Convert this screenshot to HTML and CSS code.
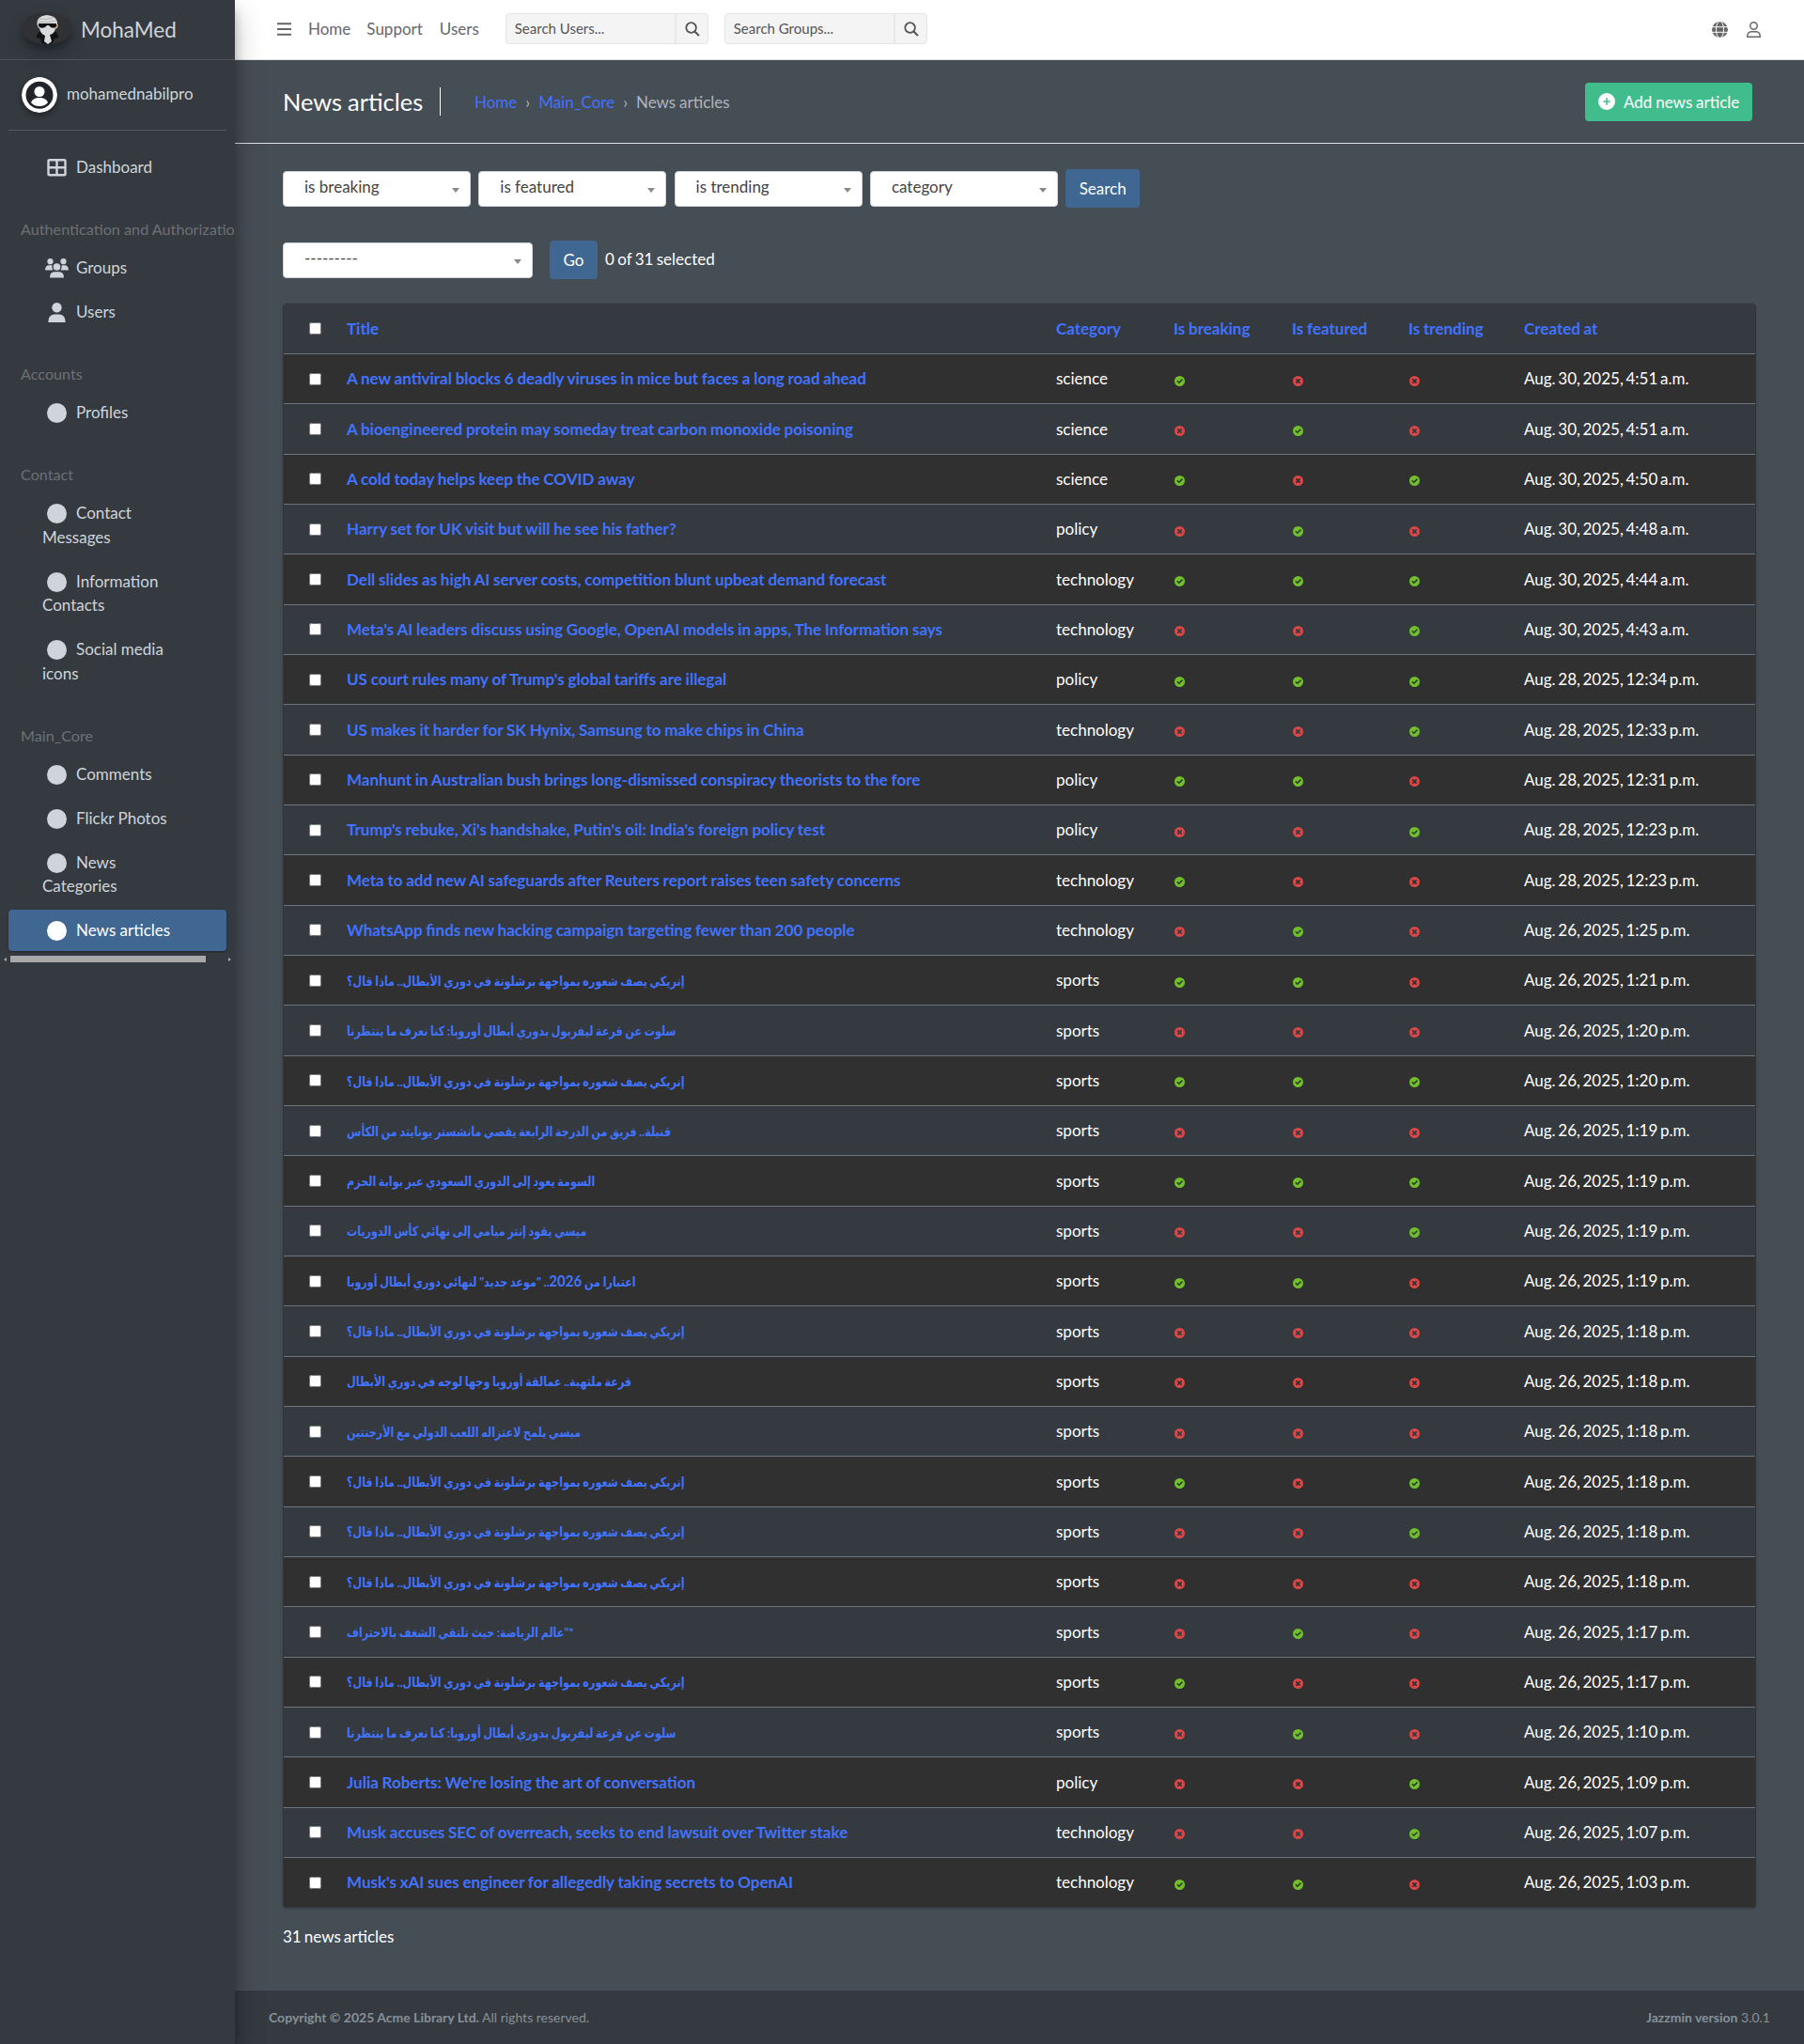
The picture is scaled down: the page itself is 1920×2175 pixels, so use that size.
FILE: index.html
```html
<!DOCTYPE html>
<html lang="en">
<head>
<meta charset="utf-8">
<title>News articles</title>
<link rel="stylesheet" href="styles.css">
</head>
<body>
<svg class="defs" aria-hidden="true">
<symbol id="y" viewBox="0 0 12 12"><path fill="#70bf2b" d="M6 0a6 6 0 1 0 0 12A6 6 0 0 0 6 0zM5.3 9.1 2.5 6.4l1.2-1.2 1.6 1.5L8.6 3.4l1.2 1.2z"/></symbol>
<symbol id="n" viewBox="0 0 12 12"><path fill="#dd4646" d="M6 0a6 6 0 1 0 0 12A6 6 0 0 0 6 0zM9 7.7 7.7 9 6 7.3 4.3 9 3 7.7 4.7 6 3 4.3 4.300 3 6 4.700 7.700 3 9 4.300 7.300 6z"/></symbol>
<symbol id="dot" viewBox="0 0 21 21"><circle cx="10.5" cy="10.5" r="10.5"/></symbol>
<symbol id="glass" viewBox="0 0 16 16"><g fill="none" stroke="currentColor" stroke-width="1.8"><circle cx="6.600" cy="6.500" r="5.300"/><path stroke-width="2" d="m10.400 10.500 4.500 4.500"/></g></symbol>
</svg>
<div class="layout">
<aside class="sidebar">
  <a class="brand">
    <svg class="brand-logo" viewBox="0 0 54 34"><ellipse cx="27" cy="17" rx="27" ry="17" fill="#303134"/><path d="M16 25q2-5 7-6h9q5 1 7 6v2l-4 1-2 5q-6 2-12 0l-1-5-4-1z" fill="#111214"/><path d="M16.500 13q-1-9 10.500-10 11.500 1 11 10l-1 4h-19z" fill="#d9d9db"/><path d="M18 7q9 2 17-2M17 10q10 2 20-1" stroke="#aaa" fill="none" stroke-width=".8"/><path d="M36 13h3l-1 4-3 1z" fill="#c9a781"/><path d="M19 17h17q-1 6-6 7l2 7-4 3-4-3 1-6q-5-2-6-8z" fill="#d9d9db"/><path d="M18 12h19v3q-2 3-6 1l-2-2h-2l-2 2q-5 2-7-1z" fill="#111"/></svg>
    <span>MohaMed</span>
  </a>
  <div class="user">
    <svg class="avatar" viewBox="0 0 38 38"><circle cx="19" cy="19" r="19" fill="#fff"/><circle cx="19" cy="19.300" r="14.500" fill="#212529"/><circle cx="19" cy="15.500" r="5.500" fill="#fff"/><path d="M10 27q2-5 9-5t9 5q-3 4-9 4t-9-4z" fill="#fff"/></svg>
    <span>mohamednabilpro</span>
  </div>
  <nav class="menu">
    <a class="item"><svg class="ico" viewBox="0 0 21 21"><path fill="none" stroke="currentColor" stroke-width="2.400" d="M2.500 2.200h16q1 0 1 1v14q0 1-1 1h-16q-1 0-1-1v-14q0-1 1-1zM10.500 2v16M1.500 10.200h18"/></svg>Dashboard</a>
    <div class="group">Authentication and Authorization</div>
    <a class="item"><svg class="ico wide" viewBox="0 0 25 21"><circle cx="5.500" cy="3.200" r="3.100"/><circle cx="19.500" cy="3.200" r="3.100"/><path d="M0 12.600q0-5.300 4.500-5.400h3q-.8 3 1 5.400zM25 12.600q0-5.300-4.500-5.400h-3q.8 3-1 5.400z"/><circle cx="12.500" cy="9" r="3.800"/><path d="M5 20.500q0-6.300 5-6.300h5q5 0 5 6.300z"/></svg>Groups</a>
    <a class="item"><svg class="ico" viewBox="0 0 21 21"><circle cx="10.500" cy="5.300" r="5.200"/><path d="M1.300 21q0-8.500 7-8.500h4.400q7 0 7 8.500z"/></svg>Users</a>
    <div class="group">Accounts</div>
    <a class="item"><svg class="ico"><use href="#dot"/></svg>Profiles</a>
    <div class="group">Contact</div>
    <a class="item"><svg class="ico"><use href="#dot"/></svg>Contact Messages</a>
    <a class="item"><svg class="ico"><use href="#dot"/></svg>Information Contacts</a>
    <a class="item"><svg class="ico"><use href="#dot"/></svg>Social media icons</a>
    <div class="group">Main_Core</div>
    <a class="item"><svg class="ico"><use href="#dot"/></svg>Comments</a>
    <a class="item"><svg class="ico"><use href="#dot"/></svg>Flickr Photos</a>
    <a class="item"><svg class="ico"><use href="#dot"/></svg>News Categories</a>
    <a class="item active"><svg class="ico"><use href="#dot"/></svg>News articles</a>
  </nav>
  <div class="scroll"><i class="left"></i><b></b><i class="right"></i></div>
</aside>
<div class="page">
<header class="topbar">
  <svg class="bars" viewBox="0 0 15 14"><path d="M0 1.200h15M0 7h15M0 12.800h15" stroke="currentColor" stroke-width="1.900"/></svg>
  <a>Home</a><a>Support</a><a>Users</a>
  <div class="find"><span>Search Users...</span><svg><use href="#glass"/></svg></div>
  <div class="find"><span>Search Groups...</span><svg><use href="#glass"/></svg></div>
  <svg class="globe" viewBox="0 0 17 17"><circle cx="8.500" cy="8.500" r="8.500" fill="currentColor"/><g fill="none" stroke="#fff" stroke-width="1"><ellipse cx="8.500" cy="8.500" rx="4" ry="9"/><path d="M0 5.700h17M0 11.300h17"/></g></svg>
  <svg class="person" viewBox="0 0 15 17"><g fill="none" stroke="currentColor" stroke-width="1.500"><circle cx="7.500" cy="4.500" r="3.700"/><path d="M.8 16.200q-.3-5.400 4.200-5.400h5q4.500 0 4.200 5.400z"/></g></svg>
</header>
<section class="heading">
  <h1>News articles</h1>
  <div class="crumbs"><a>Home</a><i>›</i><a>Main_Core</a><i>›</i><span>News articles</span></div>
  <a class="btn add"><svg viewBox="0 0 18 18"><circle cx="9" cy="9" r="9" fill="#fff"/><path d="M9 5.300v7.400M5.300 9h7.400" stroke="#41bd8d" stroke-width="1.600"/></svg>Add news article</a>
</section>
<main>
  <div class="filters"><div class="select">is breaking</div><div class="select">is featured</div><div class="select">is trending</div><div class="select">category</div><a class="btn">Search</a></div>
  <div class="actions"><div class="select long">---------</div><a class="btn">Go</a><span>0 of 31 selected</span></div>
  <div class="card">
  <table>
  <colgroup><col class="c1"><col class="c2"><col class="c3"><col class="c4"><col class="c5"><col class="c6"><col></colgroup>
  <thead><tr><th><input type="checkbox"></th><th>Title</th><th>Category</th><th>Is breaking</th><th>Is featured</th><th>Is trending</th><th>Created at</th></tr></thead>
  <tbody>
  <tr><td><input type="checkbox"><th>A new antiviral blocks 6 deadly viruses in mice but faces a long road ahead<td>science<td><svg><use href="#y"/></svg><td><svg><use href="#n"/></svg><td><svg><use href="#n"/></svg><td>Aug. 30, 2025, 4:51 a.m.
  <tr><td><input type="checkbox"><th>A bioengineered protein may someday treat carbon monoxide poisoning<td>science<td><svg><use href="#n"/></svg><td><svg><use href="#y"/></svg><td><svg><use href="#n"/></svg><td>Aug. 30, 2025, 4:51 a.m.
  <tr><td><input type="checkbox"><th>A cold today helps keep the COVID away<td>science<td><svg><use href="#y"/></svg><td><svg><use href="#n"/></svg><td><svg><use href="#y"/></svg><td>Aug. 30, 2025, 4:50 a.m.
  <tr><td><input type="checkbox"><th>Harry set for UK visit but will he see his father?<td>policy<td><svg><use href="#n"/></svg><td><svg><use href="#y"/></svg><td><svg><use href="#n"/></svg><td>Aug. 30, 2025, 4:48 a.m.
  <tr><td><input type="checkbox"><th>Dell slides as high AI server costs, competition blunt upbeat demand forecast<td>technology<td><svg><use href="#y"/></svg><td><svg><use href="#y"/></svg><td><svg><use href="#y"/></svg><td>Aug. 30, 2025, 4:44 a.m.
  <tr><td><input type="checkbox"><th>Meta's AI leaders discuss using Google, OpenAI models in apps, The Information says<td>technology<td><svg><use href="#n"/></svg><td><svg><use href="#n"/></svg><td><svg><use href="#y"/></svg><td>Aug. 30, 2025, 4:43 a.m.
  <tr><td><input type="checkbox"><th>US court rules many of Trump's global tariffs are illegal<td>policy<td><svg><use href="#y"/></svg><td><svg><use href="#y"/></svg><td><svg><use href="#y"/></svg><td>Aug. 28, 2025, 12:34 p.m.
  <tr><td><input type="checkbox"><th>US makes it harder for SK Hynix, Samsung to make chips in China<td>technology<td><svg><use href="#n"/></svg><td><svg><use href="#n"/></svg><td><svg><use href="#y"/></svg><td>Aug. 28, 2025, 12:33 p.m.
  <tr><td><input type="checkbox"><th>Manhunt in Australian bush brings long-dismissed conspiracy theorists to the fore<td>policy<td><svg><use href="#y"/></svg><td><svg><use href="#y"/></svg><td><svg><use href="#n"/></svg><td>Aug. 28, 2025, 12:31 p.m.
  <tr><td><input type="checkbox"><th>Trump's rebuke, Xi's handshake, Putin's oil: India's foreign policy test<td>policy<td><svg><use href="#n"/></svg><td><svg><use href="#n"/></svg><td><svg><use href="#y"/></svg><td>Aug. 28, 2025, 12:23 p.m.
  <tr><td><input type="checkbox"><th>Meta to add new AI safeguards after Reuters report raises teen safety concerns<td>technology<td><svg><use href="#y"/></svg><td><svg><use href="#n"/></svg><td><svg><use href="#n"/></svg><td>Aug. 28, 2025, 12:23 p.m.
  <tr><td><input type="checkbox"><th>WhatsApp finds new hacking campaign targeting fewer than 200 people<td>technology<td><svg><use href="#n"/></svg><td><svg><use href="#y"/></svg><td><svg><use href="#n"/></svg><td>Aug. 26, 2025, 1:25 p.m.
  <tr><td><input type="checkbox"><th><span class="ar">إنريكي يصف شعوره بمواجهة برشلونة في دوري الأبطال.. ماذا قال؟</span><td>sports<td><svg><use href="#y"/></svg><td><svg><use href="#y"/></svg><td><svg><use href="#n"/></svg><td>Aug. 26, 2025, 1:21 p.m.
  <tr><td><input type="checkbox"><th><span class="ar">سلوت عن قرعة ليفربول بدوري أبطال أوروبا: كنا نعرف ما ينتظرنا</span><td>sports<td><svg><use href="#n"/></svg><td><svg><use href="#n"/></svg><td><svg><use href="#n"/></svg><td>Aug. 26, 2025, 1:20 p.m.
  <tr><td><input type="checkbox"><th><span class="ar">إنريكي يصف شعوره بمواجهة برشلونة في دوري الأبطال.. ماذا قال؟</span><td>sports<td><svg><use href="#y"/></svg><td><svg><use href="#y"/></svg><td><svg><use href="#y"/></svg><td>Aug. 26, 2025, 1:20 p.m.
  <tr><td><input type="checkbox"><th><span class="ar">قنبلة.. فريق من الدرجة الرابعة يقصي مانشستر يونايتد من الكأس</span><td>sports<td><svg><use href="#n"/></svg><td><svg><use href="#n"/></svg><td><svg><use href="#n"/></svg><td>Aug. 26, 2025, 1:19 p.m.
  <tr><td><input type="checkbox"><th><span class="ar">السومة يعود إلى الدوري السعودي عبر بوابة الحزم</span><td>sports<td><svg><use href="#y"/></svg><td><svg><use href="#y"/></svg><td><svg><use href="#y"/></svg><td>Aug. 26, 2025, 1:19 p.m.
  <tr><td><input type="checkbox"><th><span class="ar">ميسي يقود إنتر ميامي إلى نهائي كأس الدوريات</span><td>sports<td><svg><use href="#n"/></svg><td><svg><use href="#n"/></svg><td><svg><use href="#y"/></svg><td>Aug. 26, 2025, 1:19 p.m.
  <tr><td><input type="checkbox"><th><span class="ar">اعتبارا من <span class="num">2026</span>.. "موعد جديد" لنهائي دوري أبطال أوروبا</span><td>sports<td><svg><use href="#y"/></svg><td><svg><use href="#y"/></svg><td><svg><use href="#n"/></svg><td>Aug. 26, 2025, 1:19 p.m.
  <tr><td><input type="checkbox"><th><span class="ar">إنريكي يصف شعوره بمواجهة برشلونة في دوري الأبطال.. ماذا قال؟</span><td>sports<td><svg><use href="#n"/></svg><td><svg><use href="#n"/></svg><td><svg><use href="#n"/></svg><td>Aug. 26, 2025, 1:18 p.m.
  <tr><td><input type="checkbox"><th><span class="ar">قرعة ملتهبة.. عمالقة أوروبا وجها لوجه في دوري الأبطال</span><td>sports<td><svg><use href="#n"/></svg><td><svg><use href="#n"/></svg><td><svg><use href="#n"/></svg><td>Aug. 26, 2025, 1:18 p.m.
  <tr><td><input type="checkbox"><th><span class="ar">ميسي يلمح لاعتزاله اللعب الدولي مع الأرجنتين</span><td>sports<td><svg><use href="#n"/></svg><td><svg><use href="#n"/></svg><td><svg><use href="#n"/></svg><td>Aug. 26, 2025, 1:18 p.m.
  <tr><td><input type="checkbox"><th><span class="ar">إنريكي يصف شعوره بمواجهة برشلونة في دوري الأبطال.. ماذا قال؟</span><td>sports<td><svg><use href="#y"/></svg><td><svg><use href="#n"/></svg><td><svg><use href="#y"/></svg><td>Aug. 26, 2025, 1:18 p.m.
  <tr><td><input type="checkbox"><th><span class="ar">إنريكي يصف شعوره بمواجهة برشلونة في دوري الأبطال.. ماذا قال؟</span><td>sports<td><svg><use href="#n"/></svg><td><svg><use href="#n"/></svg><td><svg><use href="#y"/></svg><td>Aug. 26, 2025, 1:18 p.m.
  <tr><td><input type="checkbox"><th><span class="ar">إنريكي يصف شعوره بمواجهة برشلونة في دوري الأبطال.. ماذا قال؟</span><td>sports<td><svg><use href="#n"/></svg><td><svg><use href="#n"/></svg><td><svg><use href="#n"/></svg><td>Aug. 26, 2025, 1:18 p.m.
  <tr><td><input type="checkbox"><th><span class="ar">عالم الرياضة: حيث تلتقي الشغف بالاحتراف"*</span><td>sports<td><svg><use href="#n"/></svg><td><svg><use href="#y"/></svg><td><svg><use href="#n"/></svg><td>Aug. 26, 2025, 1:17 p.m.
  <tr><td><input type="checkbox"><th><span class="ar">إنريكي يصف شعوره بمواجهة برشلونة في دوري الأبطال.. ماذا قال؟</span><td>sports<td><svg><use href="#y"/></svg><td><svg><use href="#n"/></svg><td><svg><use href="#n"/></svg><td>Aug. 26, 2025, 1:17 p.m.
  <tr><td><input type="checkbox"><th><span class="ar">سلوت عن قرعة ليفربول بدوري أبطال أوروبا: كنا نعرف ما ينتظرنا</span><td>sports<td><svg><use href="#n"/></svg><td><svg><use href="#y"/></svg><td><svg><use href="#n"/></svg><td>Aug. 26, 2025, 1:10 p.m.
  <tr><td><input type="checkbox"><th>Julia Roberts: We're losing the art of conversation<td>policy<td><svg><use href="#n"/></svg><td><svg><use href="#n"/></svg><td><svg><use href="#y"/></svg><td>Aug. 26, 2025, 1:09 p.m.
  <tr><td><input type="checkbox"><th>Musk accuses SEC of overreach, seeks to end lawsuit over Twitter stake<td>technology<td><svg><use href="#n"/></svg><td><svg><use href="#n"/></svg><td><svg><use href="#y"/></svg><td>Aug. 26, 2025, 1:07 p.m.
  <tr><td><input type="checkbox"><th>Musk's xAI sues engineer for allegedly taking secrets to OpenAI<td>technology<td><svg><use href="#y"/></svg><td><svg><use href="#y"/></svg><td><svg><use href="#n"/></svg><td>Aug. 26, 2025, 1:03 p.m.
  </tbody>
  </table>
  </div>
  <p class="count">31 news articles</p>
</main>
<footer><span><b>Copyright © 2025 Acme Library Ltd.</b> All rights reserved.</span><span><b>Jazzmin version</b> 3.0.1</span></footer>
</div>
</div>
</body>
</html>
```
FILE: styles.css
```css
* { box-sizing: border-box; }
body { margin: 0; background: #454d55; color: #fff; font: 17px/25.5px Lato, "DejaVu Sans", sans-serif; }
.defs { position: absolute; width: 0; height: 0; }
.layout { display: flex; height: 2175px; overflow: hidden; }

/* Sidebar */
.sidebar { width: 250px; flex: none; background: #343a40; color: #ced4da; position: relative; z-index: 2; box-shadow: 0 14px 28px rgba(0,0,0,.25), 0 10px 10px rgba(0,0,0,.22); }
.brand { display: flex; align-items: center; height: 64px; padding: 0 0 4px 23px; border-bottom: 1px solid #4b545c; font-size: 22.5px; gap: 9px; }
.brand-logo { width: 54px; height: 34px; border-radius: 50%; box-shadow: 0 10px 20px rgba(0,0,0,.19), 0 6px 6px rgba(0,0,0,.23); }
.brand span { padding-top: 4px; }
.user { display: flex; align-items: center; height: 75px; margin: 0 9px; padding-left: 14px; border-bottom: 1px solid #4f5962; gap: 10px; }
.user span { padding-bottom: 2px; }
.avatar { width: 38px; height: 38px; border-radius: 50%; box-shadow: 0 3px 6px rgba(0,0,0,.16), 0 3px 6px rgba(0,0,0,.23); }
.menu { padding: 17px 9px 0; overflow: hidden; }
.item { display: block; margin-bottom: 3px; padding: 9.25px 41px 9.25px 36px; border-radius: 4px; }
.item.active { background: #3f6791; color: #fff; box-shadow: 0 1px 3px rgba(0,0,0,.12), 0 1px 2px rgba(0,0,0,.24); }
.ico { width: 21px; height: 21px; margin: -4px 10px -4px 5px; fill: currentColor; vertical-align: -1px; }
.ico.wide { width: 25px; margin: -4px 8px -4px 3px; }
.group { height: 60px; padding: 29px 0 0 13px; font-size: 16.2px; line-height: 23px; color: #6c7075; white-space: nowrap; margin-right: -9px; }
.scroll { display: flex; align-items: center; height: 7px; margin-top: 2px; padding: 0 4px; }
.scroll b { width: 208px; height: 7px; margin: 0 24px 0 4px; background: #a8a8a8; }
.scroll i { border: 2.5px solid transparent; }
.scroll .left { border-right: 3px solid #aaa; border-left: 0; }
.scroll .right { border-left: 3px solid #aaa; border-right: 0; }

/* Top bar and page heading */
.page { flex: 1; display: flex; flex-direction: column; min-width: 0; }
.topbar { display: flex; align-items: center; height: 64px; flex: none; padding: 0 41px 2px 45px; background: #fff; border-bottom: 1px solid #dee2e6; color: #666; }
.bars { width: 15px; height: 14px; margin-right: 18px; }
.topbar a { margin-right: 17px; }
.topbar a:nth-of-type(2) { margin-right: 18px; }
.find { display: flex; height: 33px; width: 216px; border: 1px solid #e6e6e6; border-radius: 4px; background: #f4f4f4; font-size: 15px; line-height: 31px; color: #555; }
.find + .find { margin-left: 17px; }
.find span { width: 181px; padding-left: 9px; border-right: 2px solid #e8e8e8; }
.find svg { width: 16px; height: 16px; margin: 8px 0 0 9px; color: #555; }
.topbar a + .find { margin-left: 11px; }
.globe { width: 17px; height: 17px; margin: 1px 20px 0 auto; }
.person { width: 15px; height: 17px; margin: 1px 5px 0 0; }
.heading { display: flex; align-items: center; height: 89px; flex: none; padding: 0 55px 0 51px; border-bottom: 1px solid #dee2e6; word-spacing: -.5px; }
h1 { margin: 0; width: 168px; height: 30px; border-right: 1px solid #fff; font-size: 25.400px; font-weight: 400; line-height: 30px; white-space: nowrap; }
.crumbs { display: flex; flex: 1; margin: 2px 0 0 36px; color: #adb5bd; }
.crumbs a, th { color: #4173ff; }
.crumbs i { margin: 0 9px; font-style: normal; }
.btn { display: block; height: 41px; padding: 8px 14.500px; border-radius: 4px; background: #3f6791; line-height: 25px; }
.add { display: flex; align-items: center; width: 178px; padding: 8px 0 8px 14px; background: #41bd8d; white-space: nowrap; }
.add svg { width: 18px; height: 18px; margin-right: 9px; }

/* Filters and table */
main { flex: 1; padding: 27px 51px 0; }
.filters { display: flex; align-items: center; gap: 8.300px; height: 41px; }
.actions { display: flex; align-items: center; height: 41px; margin: 35px 0 26px; word-spacing: -1px; }
.actions .btn { margin: 0 8px 0 18px; }
.actions span { padding-bottom: 2px; }
.select { position: relative; width: 200px; height: 38px; padding: 3px 22px; border: 1px solid #ced4da; border-radius: 4px; background: #fff; color: #444; }
.select::after { content: ""; position: absolute; right: 11px; top: 17px; border: 4px solid transparent; border-top: 5px solid #888; border-bottom: 0; }
.select.long { width: 266px; }
.card { width: 1568px; height: 1707px; border: 1px solid #31363b; border-radius: 4px; background: #343a40; overflow: hidden; box-shadow: 0 1px 3px rgba(0,0,0,.2); }
table { table-layout: fixed; width: 100%; border-spacing: 0; }
.c1 { width: 54px; } .c2 { width: 755px; } .c3 { width: 125px; } .c4 { width: 126px; } .c5 { width: 124px; } .c6 { width: 123px; }
th, td { height: 53.333px; padding: 0 13px; text-align: left; white-space: nowrap; border-top: 1px solid #6c757d; }
th { word-spacing: -.4px; }
td { word-spacing: -1.7px; }
thead th { height: 52px; border-top: 0; }
th:first-child, td:first-child { padding-left: 27px; }
tbody tr:nth-child(odd) { background: #303030; }
input { display: block; width: 13px; height: 13px; margin: 0; }
thead input { margin-bottom: 1px; }
td svg { display: block; width: 11px; height: 11px; margin: 4px 0 0 1px; }
.ar { display: inline-block; font-family: Lato, "DejaVu Sans Condensed", "DejaVu Sans", sans-serif; font-stretch: condensed; font-size: 14px; transform: scaleX(.887); transform-origin: left; }
.num { font-size: 17px; }
.count { margin: 18px 0 0; word-spacing: -1.300px; }
footer { display: flex; justify-content: space-between; height: 58px; padding: 17px 36px 0; border-top: 1px solid #4b545c; background: #343a40; color: #869099; font-size: 14px; line-height: 24px; }
```
